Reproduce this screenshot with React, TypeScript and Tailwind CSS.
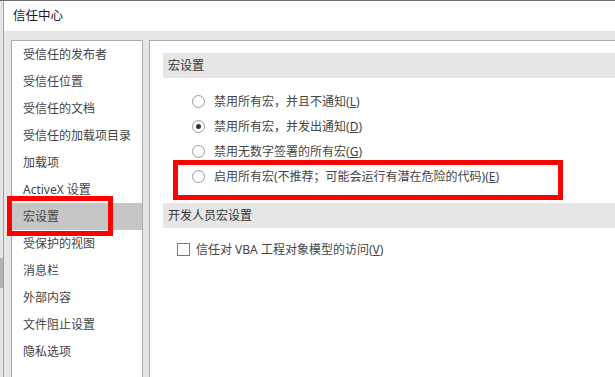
const NAV = [
  "受信任的发布者",
  "受信任位置",
  "受信任的文档",
  "受信任的加载项目录",
  "加载项",
  "ActiveX 设置",
  "宏设置",
  "受保护的视图",
  "消息栏",
  "外部内容",
  "文件阻止设置",
  "隐私选项",
];

const OPTIONS: { label: string; key: string; checked?: boolean; marked?: boolean }[] = [
  { label: "禁用所有宏，并且不通知", key: "L" },
  { label: "禁用所有宏，并发出通知", key: "D", checked: true },
  { label: "禁用无数字签署的所有宏", key: "G" },
  { label: "启用所有宏(不推荐；可能会运行有潜在危险的代码)", key: "E", marked: true },
];

const font = "font-['Segoe_UI','Noto_Sans','Noto_Sans_CJK_SC',sans-serif]";

function Radio({ checked }: { checked?: boolean }) {
  return (
    <span className="w-[13px] h-[13px] rounded-full border border-[#9a9a9a] bg-white flex items-center justify-center shrink-0">
      {checked && <span className="w-[5px] h-[5px] rounded-full bg-[#333]" />}
    </span>
  );
}

export default function App() {
  return (
    <div className={"w-[615px] h-[377px] flex overflow-hidden border-t border-[#6e6e6e] bg-white " + font}>
      {/* strip of the window behind */}
      <div className="w-[3px] bg-[#e6e6e6] flex flex-col shrink-0">
        <div className="h-[257px]" />
        <div className="h-[30px] bg-[#b4b4b4]" />
      </div>

      <div className="flex-1 flex flex-col border-l border-[#a0a0a0] min-w-0">
        <div className="h-[30px] bg-white flex items-center pl-[9px] text-[12.5px] text-[#1a1a1a]">信任中心</div>

        <div className="flex-1 bg-[#e6e6e6] pt-[9px] pl-[7px] flex gap-[6px] min-h-0">
          {/* left nav */}
          <div className="w-[132px] shrink-0 bg-white border-l border-t border-r border-[#ababab]">
            {NAV.map((n) => {
              const active = n === "宏设置";
              return (
                <div
                  key={n}
                  className={
                    "relative h-[27px] flex items-center pl-[11px] text-[12px] text-[#444] " +
                    (active ? "bg-[#c6c6c6] text-[#333]" : "")
                  }
                >
                  {n}
                  {active && (
                    <div className="absolute left-[-5px] top-[-7px] w-[106px] h-[40px] border-[5px] border-[#ff0000]" />
                  )}
                </div>
              );
            })}
          </div>

          {/* right content */}
          <div className="flex-1 bg-white border-l border-t border-[#ababab] min-w-0">
            <div className="mt-[12px] ml-[13px] h-[25px] bg-[#e6e6e6] flex items-center pl-[5px] text-[12px] text-[#333]">
              宏设置
            </div>

            <div className="mt-[11px]">
              {OPTIONS.map((o) => (
                <div key={o.key} className="relative h-[25px] flex items-center pl-[42px] gap-[9px] text-[12px] text-[#444] whitespace-nowrap">
                  <Radio checked={o.checked} />
                  <span>
                    {o.label}(<span className="underline">{o.key}</span>)
                  </span>
                  {o.marked && (
                    <div className="absolute left-[23px] top-[-4px] w-[390px] h-[40px] border-[5px] border-[#ff0000]" />
                  )}
                </div>
              ))}
            </div>

            <div className="mt-[14px] ml-[13px] h-[25px] bg-[#e6e6e6] flex items-center pl-[5px] text-[12px] text-[#333]">
              开发人员宏设置
            </div>

            <div className="mt-[9px] h-[25px] flex items-center pl-[27px] gap-[6px] text-[12px] text-[#444] whitespace-nowrap">
              <span className="w-[13px] h-[13px] border border-[#7a7a7a] bg-white shrink-0" />
              <span>
                信任对 VBA 工程对象模型的访问(<span className="underline">V</span>)
              </span>
            </div>
          </div>
        </div>
      </div>
    </div>
  );
}
